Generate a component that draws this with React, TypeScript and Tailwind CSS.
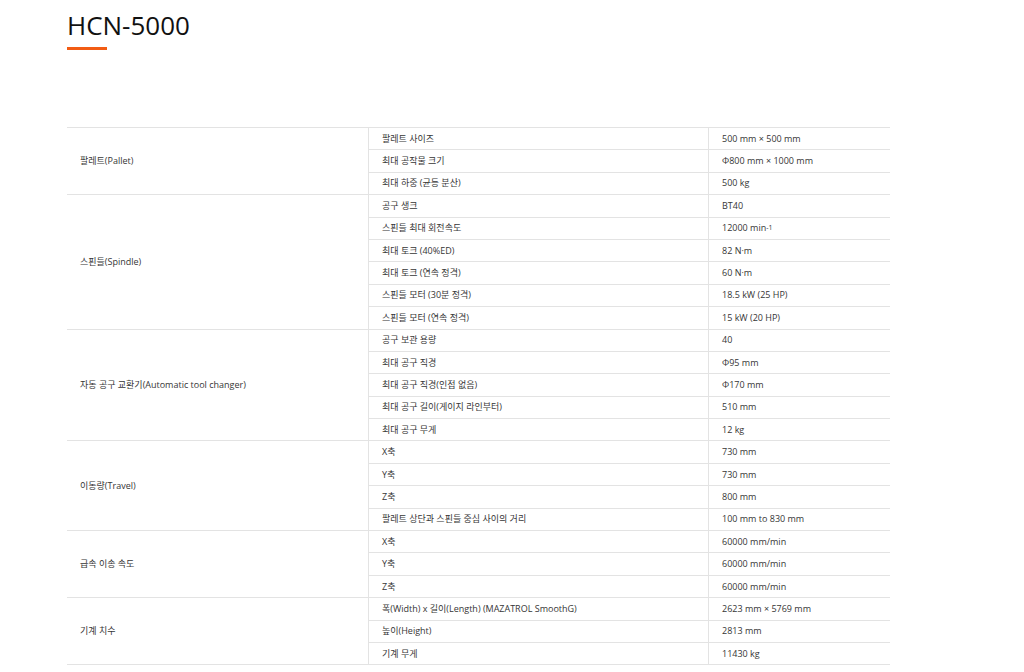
import React from 'react';

type Row = { label: React.ReactNode; value: React.ReactNode };
type Group = { title: string; rows: Row[] };

const groups: Group[] = [
  {
    title: '팔레트(Pallet)',
    rows: [
      { label: '팔레트 사이즈', value: '500 mm × 500 mm' },
      { label: '최대 공작물 크기', value: 'Φ800 mm × 1000 mm' },
      { label: '최대 하중 (균등 분산)', value: '500 kg' },
    ],
  },
  {
    title: '스핀들(Spindle)',
    rows: [
      { label: '공구 생크', value: 'BT40' },
      {
        label: '스핀들 최대 회전속도',
        value: (
          <>
            12000 min<sup className="text-[7px] relative -top-[1.5px]">-1</sup>
          </>
        ),
      },
      { label: '최대 토크 (40%ED)', value: '82 N·m' },
      { label: '최대 토크 (연속 정격)', value: '60 N·m' },
      { label: '스핀들 모터 (30분 정격)', value: '18.5 kW (25 HP)' },
      { label: '스핀들 모터 (연속 정격)', value: '15 kW (20 HP)' },
    ],
  },
  {
    title: '자동 공구 교환기(Automatic tool changer)',
    rows: [
      { label: '공구 보관 용량', value: '40' },
      { label: '최대 공구 직경', value: 'Φ95 mm' },
      { label: '최대 공구 직경(인접 없음)', value: 'Φ170 mm' },
      { label: '최대 공구 길이(게이지 라인부터)', value: '510 mm' },
      { label: '최대 공구 무게', value: '12 kg' },
    ],
  },
  {
    title: '이동량(Travel)',
    rows: [
      { label: 'X축', value: '730 mm' },
      { label: 'Y축', value: '730 mm' },
      { label: 'Z축', value: '800 mm' },
      { label: '팔레트 상단과 스핀들 중심 사이의 거리', value: '100 mm to 830 mm' },
    ],
  },
  {
    title: '급속 이송 속도',
    rows: [
      { label: 'X축', value: '60000 mm/min' },
      { label: 'Y축', value: '60000 mm/min' },
      { label: 'Z축', value: '60000 mm/min' },
    ],
  },
  {
    title: '기계 치수',
    rows: [
      { label: '폭(Width) x 길이(Length) (MAZATROL SmoothG)', value: '2623 mm × 5769 mm' },
      { label: '높이(Height)', value: '2813 mm' },
      { label: '기계 무게', value: '11430 kg' },
    ],
  },
];

function SpecGroup({ group }: { group: Group }) {
  return (
    <div className="flex">
      <div className="w-[302px] shrink-0 flex items-center pl-[13px] border-r border-b border-[#e3e3e3]">
        {group.title}
      </div>
      <div className="flex-1 flex flex-col">
        {group.rows.map((row, i) => (
          <div key={i} className="flex h-[22.4px] items-center border-b border-[#e3e3e3]">
            <div className="w-[340px] shrink-0 h-full flex items-center pl-[13px] border-r border-[#e3e3e3]">
              {row.label}
            </div>
            <div className="flex-1 pl-[13px]">{row.value}</div>
          </div>
        ))}
      </div>
    </div>
  );
}

export default function App(): React.JSX.Element {
  return (
    <div
      className="min-h-[672px] bg-white text-[#363636]"
      style={{ fontFamily: '"Open Sans", "Noto Sans CJK KR", sans-serif' }}
    >
      <div className="ml-[67px] w-[823px] pt-[7px]">
        <h1 className="text-[26px] leading-[36px] font-normal text-[#111]">HCN-5000</h1>
        <div className="mt-[4px] w-[40px] h-[3px] bg-[#f25c14]" />
        <div className="mt-[77px] border-t border-[#e3e3e3] text-[9px] leading-[12px]">
          {groups.map((g) => (
            <SpecGroup key={g.title} group={g} />
          ))}
        </div>
      </div>
    </div>
  );
}
